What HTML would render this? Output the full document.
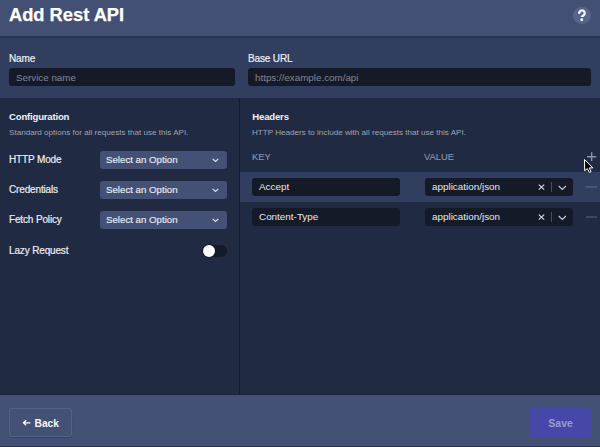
<!DOCTYPE html>
<html>
<head>
<meta charset="utf-8">
<style>
*{box-sizing:border-box;margin:0;padding:0}
html,body{width:600px;height:447px;overflow:hidden;background:#212a43;font-family:"Liberation Sans",sans-serif}
.a{position:absolute;white-space:nowrap}
#hdr{left:0;top:0;width:600px;height:36px;background:#445073}
#hdrline{left:0;top:36px;width:600px;height:1.5px;background:#2a3452}
#top{left:0;top:37.5px;width:600px;height:60.5px;background:#323e5f}
#lower{left:0;top:98px;width:600px;height:297px;background:#212a43}
#div{left:239px;top:98px;width:1px;height:297px;background:#161a2c}
#ftrtop{left:0;top:394px;width:600px;height:1px;background:#1d2337}
#ftr{left:0;top:395px;width:600px;height:51px;background:#445074}
#ftrline{left:0;top:446px;width:600px;height:1px;background:#29314c}
.title{font-weight:bold;font-size:18.3px;color:#fff;line-height:20px;-webkit-text-stroke:0.25px #fff}
.lbl{font-size:10px;letter-spacing:-0.15px;color:#eceef3;line-height:12px;-webkit-text-stroke:0.2px #eceef3}
.h{font-weight:bold;font-size:9.6px;letter-spacing:-0.2px;color:#f0f1f5;line-height:12px}
.desc{font-size:8.1px;color:#9ea4b6;line-height:10px}
.inp{background:#151a28;border-radius:3px;height:18px}
.ph{font-size:9.8px;color:#80869a;line-height:12px}
.sel{background:#445174;border-radius:3px;height:18.4px;width:127px}
.seltxt{font-size:9.7px;color:#e9ecf2;line-height:12px;-webkit-text-stroke:0.15px #e9ecf2}
.th{font-size:9.4px;color:#8c95b2;line-height:11px;-webkit-text-stroke:0.1px #8c95b2}
.val{font-size:9.9px;color:#e8eaf0;line-height:12px}
svg{position:absolute;overflow:visible}
</style>
</head>
<body>
<div class="a" id="hdr"></div>
<div class="a" id="hdrline"></div>
<div class="a" id="top"></div>
<div class="a" id="lower"></div>
<div class="a" id="div"></div>
<div class="a" id="ftrtop"></div>
<div class="a" id="ftr"></div>
<div class="a" id="ftrline"></div>

<div class="a title" style="left:9px;top:5.4px">Add Rest API</div>
<div class="a" style="left:573px;top:6.6px;width:17.6px;height:17.6px;border-radius:50%;background:#58648b"></div>
<svg style="left:573px;top:6.9px" width="18" height="18" viewBox="0 0 18 18"><path d="M6.3 6.0 A2.7 2.7 0 1 1 10.5 8.4 C9.4 9.2 8.75 9.5 8.75 9.9" fill="none" stroke="#f4f6ff" stroke-width="2.3"/><circle cx="6.3" cy="6.0" r="1.15" fill="#f4f6ff"/><circle cx="8.75" cy="12.75" r="1.45" fill="#f4f6ff"/></svg>

<div class="a lbl" style="left:9px;top:53.3px">Name</div>
<div class="a inp" style="left:9px;top:68px;width:226px"></div>
<div class="a ph" style="left:16px;top:71.8px">Service name</div>
<div class="a lbl" style="left:248px;top:53.3px">Base URL</div>
<div class="a inp" style="left:248px;top:68px;width:343px"></div>
<div class="a ph" style="left:255px;top:71.8px">https://example.com/api</div>

<div class="a h" style="left:9px;top:111.3px">Configuration</div>
<div class="a desc" style="left:9px;top:128.1px">Standard options for all requests that use this API.</div>

<div class="a lbl" style="left:9px;top:154px">HTTP Mode</div>
<div class="a sel" style="left:100px;top:151px"></div>
<div class="a seltxt" style="left:106px;top:154.4px">Select an Option</div>
<svg style="left:212px;top:158px" width="7" height="5" viewBox="0 0 7 5"><path d="M0.7 0.9 L3.5 3.4 L6.3 0.9" fill="none" stroke="#dfe3ee" stroke-width="1.2"/></svg>

<div class="a lbl" style="left:9px;top:184px">Credentials</div>
<div class="a sel" style="left:100px;top:181px"></div>
<div class="a seltxt" style="left:106px;top:184.4px">Select an Option</div>
<svg style="left:212px;top:188px" width="7" height="5" viewBox="0 0 7 5"><path d="M0.7 0.9 L3.5 3.4 L6.3 0.9" fill="none" stroke="#dfe3ee" stroke-width="1.2"/></svg>

<div class="a lbl" style="left:9px;top:214px">Fetch Policy</div>
<div class="a sel" style="left:100px;top:211px"></div>
<div class="a seltxt" style="left:106px;top:214.4px">Select an Option</div>
<svg style="left:212px;top:218px" width="7" height="5" viewBox="0 0 7 5"><path d="M0.7 0.9 L3.5 3.4 L6.3 0.9" fill="none" stroke="#dfe3ee" stroke-width="1.2"/></svg>

<div class="a lbl" style="left:9px;top:245px">Lazy Request</div>
<div class="a" style="left:203px;top:245px;width:24px;height:12px;border-radius:6px;background:#151a2a"></div>
<div class="a" style="left:203.2px;top:244.5px;width:12.2px;height:12.2px;border-radius:50%;background:#fff;box-shadow:0 0 0 1px #151a2a"></div>

<div class="a h" style="left:252.3px;top:111.3px">Headers</div>
<div class="a desc" style="left:252px;top:128.1px">HTTP Headers to include with all requests that use this API.</div>
<div class="a th" style="left:252px;top:150.8px">KEY</div>
<div class="a th" style="left:424px;top:150.8px">VALUE</div>
<svg style="left:586px;top:151px" width="12" height="12" viewBox="0 0 12 12"><path d="M1.1 5.7 H10.2 M5.65 1.3 V10.1" fill="none" stroke="#8a94b8" stroke-width="1.4"/></svg>

<div class="a" style="left:240px;top:172px;width:360px;height:30px;background:#323e60"></div>
<div class="a inp" style="left:252px;top:178px;width:148px"></div>
<div class="a val" style="left:259px;top:181px">Accept</div>
<div class="a inp" style="left:424.5px;top:178px;width:148px"></div>
<div class="a val" style="left:432px;top:181px">application/json</div>
<svg style="left:538px;top:184px" width="7" height="7" viewBox="0 0 7 7"><path d="M0.8 0.6 L6.2 5.6 M6.2 0.6 L0.8 5.6" fill="none" stroke="#d5d8e2" stroke-width="1.2"/></svg>
<div class="a" style="left:551px;top:182px;width:1px;height:10px;background:#464d6a"></div>
<svg style="left:558px;top:184.6px" width="10" height="6" viewBox="0 0 10 6"><path d="M0.7 1 L4.3 4.5 L7.9 1" fill="none" stroke="#c8ccd8" stroke-width="1.1"/></svg>
<div class="a" style="left:586px;top:186px;width:11px;height:2px;background:#4b557a"></div>

<div class="a inp" style="left:252px;top:208px;width:148px"></div>
<div class="a val" style="left:259px;top:211px">Content-Type</div>
<div class="a inp" style="left:424.5px;top:208px;width:148px"></div>
<div class="a val" style="left:432px;top:211px">application/json</div>
<svg style="left:538px;top:214px" width="7" height="7" viewBox="0 0 7 7"><path d="M0.8 0.6 L6.2 5.6 M6.2 0.6 L0.8 5.6" fill="none" stroke="#d5d8e2" stroke-width="1.2"/></svg>
<div class="a" style="left:551px;top:212px;width:1px;height:10px;background:#464d6a"></div>
<svg style="left:558px;top:214.6px" width="10" height="6" viewBox="0 0 10 6"><path d="M0.7 1 L4.3 4.5 L7.9 1" fill="none" stroke="#c8ccd8" stroke-width="1.1"/></svg>
<div class="a" style="left:586px;top:216px;width:11px;height:2px;background:#3b4465"></div>

<svg style="left:583.5px;top:158.5px" width="10" height="15" viewBox="0 0 10 15"><path d="M0.5 0.5 L0.7 11.8 L3.3 9.6 L5.3 13.4 L7.1 12.6 L5.2 8.9 L8.9 8.9 Z" fill="#000" stroke="#fff" stroke-width="1" stroke-linejoin="round"/></svg>

<div class="a" style="left:9px;top:408px;width:63px;height:29px;border:1px solid #56618a;border-radius:3px;box-shadow:0 1px 1px rgba(20,25,45,0.25)"></div>
<svg style="left:22px;top:419px" width="9" height="8" viewBox="0 0 9 8"><path d="M8.3 3.8 H1.6 M4.2 1.2 L1.4 3.8 L4.2 6.4" fill="none" stroke="#fff" stroke-width="1.25"/></svg>
<div class="a" style="left:34.6px;top:416.8px;font-size:10.2px;font-weight:bold;color:#f8f8fb;line-height:13px">Back</div>

<div class="a" style="left:530px;top:408px;width:61px;height:29px;background:#4747a9;border-radius:3px"></div>
<div class="a" style="left:548.3px;top:416.7px;font-size:10.5px;font-weight:bold;color:#9a9dc8;line-height:13px">Save</div>
</body>
</html>
